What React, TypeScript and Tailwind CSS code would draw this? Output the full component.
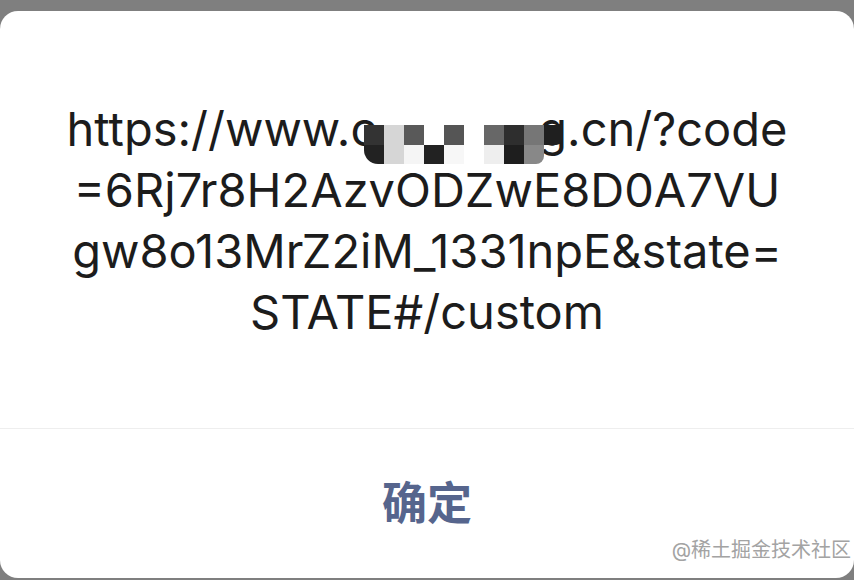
import React from "react";

const mosaicTop = ["#333333", "#d6d6d6", "#595959", "#ffffff", "#555555", "#ffffff", "#676767", "#2e2e2e", "#767676"];
const mosaicBottom = ["#222222", "#d6d6d6", "#f5f5f5", "#222222", "#f7f7f7", "#ffffff", "#eeeeee", "#1e1e1e", "#888888"];

function Mosaic() {
  return (
    <span className="relative z-10 -ml-[13px] -mr-[24px] inline-grid grid-cols-[repeat(9,20px)_18px] grid-rows-[20px_19px] align-[1px]">
      {mosaicTop.map((c, i) => (
        <span key={"t" + i} style={{ background: c }} />
      ))}
      <span className="rounded-br-[6px] rounded-tl-[3px] bg-[#1f1f1f]" />
      {mosaicBottom.map((c, i) => (
        <span
          key={"b" + i}
          className={i === 0 ? "rounded-bl-[14px]" : i === 8 ? "rounded-br-[8px]" : ""}
          style={{ background: c }}
        />
      ))}
      <span />
    </span>
  );
}

export default function App() {
  return (
    <div className="h-[580px] w-[854px] overflow-hidden bg-[#7f7f7f] pt-[11px] font-['Inter','Noto_Sans_CJK_SC',sans-serif]">
      <div className="relative flex h-[567px] flex-col rounded-[18px] bg-white">
        <div className="flex h-[417px] flex-col items-center justify-center text-center text-[47px] leading-[61px] text-[#1c1c1c]">
          <div className="h-[61px] whitespace-nowrap">
            https://www.c<Mosaic />g.cn/?code
          </div>
          <div className="h-[61px] whitespace-nowrap">=6Rj7r8H2AzvODZwE8D0A7VU</div>
          <div className="h-[61px] whitespace-nowrap">gw8o13MrZ2iM_1331npE&amp;state=</div>
          <div className="h-[61px] whitespace-nowrap">STATE#/custom</div>
        </div>
        <div className="h-[1px] bg-[#eeeeee]" />
        <div className="flex flex-1 items-center justify-center">
          <span className="text-[45px] font-bold text-[#56658d]">确定</span>
        </div>
        <span className="absolute bottom-[13px] right-[3px] text-[20px] text-[#a3a3a3]">
          @稀土掘金技术社区
        </span>
      </div>
    </div>
  );
}
